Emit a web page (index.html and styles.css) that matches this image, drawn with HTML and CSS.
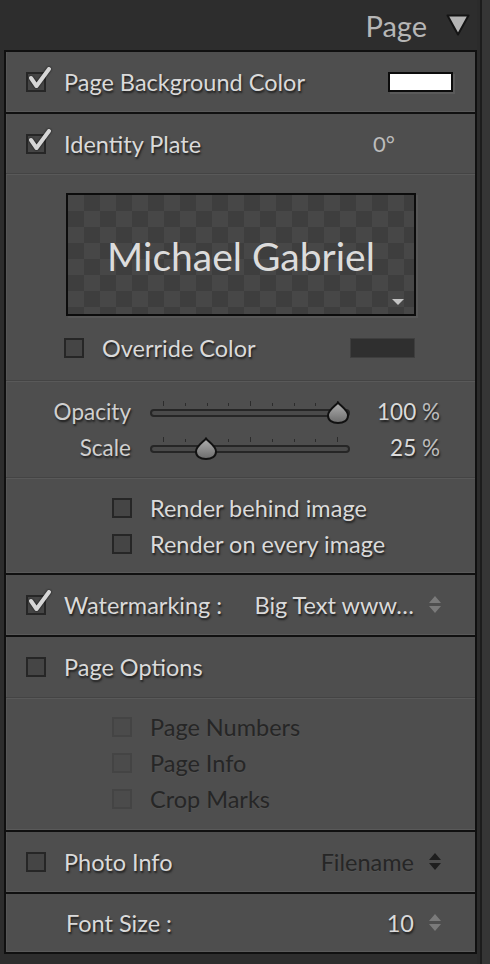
FILE: index.html
```html
<!DOCTYPE html>
<html>
  <head>
    <link rel="stylesheet" href="styles.css">
  </head>
  <body>
    <div class="column">
      <div class="header">
        <div class="header-title">Page</div>
        <svg class="header-arrow" width="24" height="22" viewBox="0 0 24 22">
          <path d="M1.5 1.5 L22.5 1.5 L12 20.5 Z" fill="#b4b4b4" stroke="#141414" stroke-width="2" stroke-linejoin="round"/>
        </svg>
      </div>

      <div class="panel">
        <!-- page background -->
        <div class="section row">
          <span class="cb on">
            <svg class="tick" width="28" height="26" viewBox="0 0 28 26"><path d="M5 12 L10.5 20 L23 3" /></svg>
          </span>
          <span class="label">Page Background Color</span>
          <span class="swatch white"></span>
        </div>

        <!-- identity plate -->
        <div class="section">
          <div class="row ident">
            <span class="cb on">
              <svg class="tick" width="28" height="26" viewBox="0 0 28 26"><path d="M5 12 L10.5 20 L23 3" /></svg>
            </span>
            <span class="label">Identity Plate</span>
            <span class="angle">0°</span>
          </div>
          <div class="divided plate-area">
            <div class="plate">
              <span class="plate-text">Michael Gabriel</span>
              <svg class="plate-caret" width="12" height="7" viewBox="0 0 12 7"><path d="M0 0 L12 0 L6 6 Z" fill="#c4c4c4"/></svg>
            </div>
            <div class="row override">
              <span class="cb"></span>
              <span class="label">Override Color</span>
              <span class="swatch dark"></span>
            </div>
          </div>
          <div class="divided sliders">
            <div class="slider-row">
              <span class="slider-label">Opacity</span>
              <div class="slider">
                <div class="ticks">
                  <i class="tall"></i><i></i><i></i><i></i><i class="tall"></i><i></i><i></i><i></i><i class="tall"></i>
                </div>
                <div class="track"></div>
                <svg class="thumb" style="left: 176px" width="24" height="24" viewBox="0 0 24 24">
                  <defs>
                    <linearGradient id="tg1" x1="0" y1="0" x2="0" y2="1">
                      <stop offset="0" stop-color="#b0b0b0"/>
                      <stop offset="1" stop-color="#6c6c6c"/>
                    </linearGradient>
                  </defs>
                  <path d="M12 1.5 C14 4.5 22 9 22 14.5 C22 19.5 17.5 22 12 22 C6.5 22 2 19.5 2 14.5 C2 9 10 4.5 12 1.5 Z" fill="url(#tg1)" stroke="#111" stroke-width="2"/>
                </svg>
              </div>
              <span class="value">100 <span class="unit">%</span></span>
            </div>
            <div class="slider-row">
              <span class="slider-label">Scale</span>
              <div class="slider">
                <div class="ticks">
                  <i class="tall"></i><i></i><i></i><i></i><i class="tall"></i><i></i><i></i><i></i><i class="tall"></i>
                </div>
                <div class="track"></div>
                <svg class="thumb" style="left: 44px" width="24" height="24" viewBox="0 0 24 24">
                  <defs>
                    <linearGradient id="tg2" x1="0" y1="0" x2="0" y2="1">
                      <stop offset="0" stop-color="#b0b0b0"/>
                      <stop offset="1" stop-color="#6c6c6c"/>
                    </linearGradient>
                  </defs>
                  <path d="M12 1.5 C14 4.5 22 9 22 14.5 C22 19.5 17.5 22 12 22 C6.5 22 2 19.5 2 14.5 C2 9 10 4.5 12 1.5 Z" fill="url(#tg2)" stroke="#111" stroke-width="2"/>
                </svg>
              </div>
              <span class="value">25 <span class="unit">%</span></span>
            </div>
          </div>
          <div class="divided options">
            <div class="row sub"><span class="cb"></span><span class="label">Render behind image</span></div>
            <div class="row sub"><span class="cb"></span><span class="label">Render on every image</span></div>
          </div>
        </div>

        <!-- watermark -->
        <div class="section row">
          <span class="cb on">
            <svg class="tick" width="28" height="26" viewBox="0 0 28 26"><path d="M5 12 L10.5 20 L23 3" /></svg>
          </span>
          <span class="label">Watermarking :</span>
          <span class="popup">
            <span class="popup-text">Big Text www…</span>
            <svg class="updown" width="12" height="18" viewBox="0 0 12 18"><path d="M6 0 L12 7 L0 7 Z M0 10 L12 10 L6 17 Z" fill="#7a7a7a"/></svg>
          </span>
        </div>

        <!-- page options -->
        <div class="section">
          <div class="row head">
            <span class="cb"></span>
            <span class="label">Page Options</span>
          </div>
          <div class="divided options page-opts">
            <div class="row sub off"><span class="cb"></span><span class="label">Page Numbers</span></div>
            <div class="row sub off"><span class="cb"></span><span class="label">Page Info</span></div>
            <div class="row sub off"><span class="cb"></span><span class="label">Crop Marks</span></div>
          </div>
        </div>

        <!-- photo info -->
        <div class="section row">
          <span class="cb"></span>
          <span class="label">Photo Info</span>
          <span class="popup off">
            <span class="popup-text">Filename</span>
            <svg class="updown" width="12" height="18" viewBox="0 0 12 18"><path d="M6 0 L12 7 L0 7 Z M0 10 L12 10 L6 17 Z" fill="#1f1f1f"/></svg>
          </span>
        </div>

        <div class="section row last">
          <span class="label font-size">Font Size :</span>
          <span class="popup">
            <span class="popup-text">10</span>
            <svg class="updown" width="12" height="18" viewBox="0 0 12 18"><path d="M6 0 L12 7 L0 7 Z M0 10 L12 10 L6 17 Z" fill="#7a7a7a"/></svg>
          </span>
        </div>
      </div>
    </div>
    <div class="rail"></div>
  </body>
</html>
```

FILE: styles.css
```css
body {
    margin: 0;
    height: 964px;
    background-color: #2d2d2d;
    font-family: Lato, "Liberation Sans", sans-serif;
    display: flex;
    overflow: hidden;
}
.column {
    width: 473px;
    padding-left: 4px;
}
.rail {
    flex: 1;
    border-left: 3px solid #2b2b2b;
    background-color: #353535;
    box-shadow: inset 2px 0 0 #1c1c1c;
}

/* header */
.header {
    height: 50px;
    display: flex;
    align-items: center;
    justify-content: flex-end;
    gap: 19px;
    padding-right: 7px;
}
.header-title {
    font-size: 29px;
    color: #b6b6b6;
}

/* panel */
.panel {
    border: 2px solid #101010;
    border-top: none;
    background-color: #4e4e4e;
}
.section {
    border-top: 2px solid #101010;
    box-shadow: inset 0 -1px 0 #595959, inset 1px 0 0 #565656;
}
.section.row {
    height: 60px;
}
.section.last {
    height: 58px;
}
.row {
    display: flex;
    align-items: center;
    padding: 0 22px 0 20px;
}
.row.head {
    height: 60px;
}
.ident {
    height: 59px;
}
.divided {
    border-top: 1px solid #444444;
    box-shadow: inset 0 1px 0 #595959;
    padding-top: 1px;
}
.label {
    font-size: 23.5px;
    color: #dadada;
    text-shadow: 1px 2px 2px #1e1e1e;
    margin-left: 18px;
    white-space: nowrap;
}

/* checkboxes */
.cb {
    position: relative;
    flex: none;
    width: 20px;
    height: 20px;
    box-sizing: border-box;
    border: 2px solid #262626;
    background-color: #454545;
}
.tick {
    position: absolute;
    left: -2px;
    top: -8px;
    overflow: visible;
}
.tick path {
    fill: none;
    stroke: #d6d6d6;
    stroke-width: 4;
    stroke-linecap: round;
    stroke-linejoin: round;
    filter: drop-shadow(0 0 1px #111);
}

/* swatches */
.swatch {
    margin-left: auto;
    width: 65px;
    height: 20px;
    box-sizing: border-box;
}
.white {
    background-color: #ffffff;
    border: 2px solid #0c0c0c;
    box-shadow: 2px 2px 0 #5a5a5a;
}
.dark {
    background-color: #2f2f2f;
    border: 1px solid #3e3e3e;
    margin-right: 38px;
}
.angle {
    margin-left: auto;
    margin-right: 58px;
    font-size: 22px;
    color: #bcbcbc;
}

/* identity plate */
.plate-area {
    padding-top: 19px;
    height: 187px;
}
.plate {
    position: relative;
    margin-left: 60px;
    width: 350px;
    height: 123px;
    box-sizing: border-box;
    border: 2px solid #0c0c0c;
    box-shadow: 2px 2px 0 #575757;
    background-color: #474747;
    background-image:
        linear-gradient(45deg, #3e3e3e 25%, transparent 25%, transparent 75%, #3e3e3e 75%),
        linear-gradient(45deg, #3e3e3e 25%, transparent 25%, transparent 75%, #3e3e3e 75%);
    background-size: 32px 32px;
    background-position: 0 0, 16px 16px;
    display: flex;
    align-items: center;
    justify-content: center;
}
.plate-text {
    font-size: 39px;
    color: #dcdcdc;
    margin-top: 2px;
}
.plate-caret {
    position: absolute;
    right: 10px;
    bottom: 8px;
}
.override {
    margin-top: 14px;
    height: 36px;
    padding-left: 58px;
}

/* sliders */
.sliders {
    height: 97px;
    padding-top: 12px;
    box-sizing: border-box;
}
.slider-row {
    height: 36px;
    display: flex;
    align-items: center;
}
.slider-label {
    width: 125px;
    text-align: right;
    font-size: 22.5px;
    color: #d0d0d0;
    text-shadow: 1px 2px 2px #1e1e1e;
}
.slider {
    position: relative;
    margin-left: 19px;
    width: 200px;
    height: 36px;
    padding-top: 8px;
    box-sizing: border-box;
}
.ticks {
    height: 5px;
    display: flex;
    justify-content: space-between;
    align-items: flex-end;
    padding: 0 12px 0 13px;
    margin-bottom: 3px;
}
.ticks i {
    width: 1px;
    height: 3px;
    background-color: #2c2c2c;
}
.ticks i.tall {
    height: 5px;
}
.track {
    height: 8px;
    box-sizing: border-box;
    border: 2px solid #262626;
    border-radius: 4px;
    background-color: #4a4a4a;
}
.thumb {
    position: absolute;
    top: 8px;
}
.value {
    margin-left: auto;
    margin-right: 35px;
    font-size: 22.5px;
    color: #dadada;
    text-shadow: 1px 2px 2px #1e1e1e;
}
.unit {
    color: #bcbcbc;
}

/* sub options */
.options {
    height: 96px;
    padding-top: 12px;
    box-sizing: border-box;
}
.row.sub {
    height: 36px;
    padding-left: 106px;
}
.page-opts {
    height: 133px;
    padding-top: 11px;
}
.off .label {
    color: #262626;
    text-shadow: 0 1px 1px rgba(255, 255, 255, 0.04);
}
.off .cb {
    border-color: #444444;
    background-color: #4b4b4b;
}

/* popups */
.popup {
    margin-left: auto;
    display: flex;
    align-items: center;
    gap: 15px;
    margin-right: 12px;
}
.popup-text {
    font-size: 23.5px;
    color: #dadada;
    text-shadow: 1px 2px 2px #1e1e1e;
}
.popup.off .popup-text {
    color: #262626;
    text-shadow: 0 1px 1px rgba(255, 255, 255, 0.04);
}
.font-size {
    margin-left: 40px;
}
```
